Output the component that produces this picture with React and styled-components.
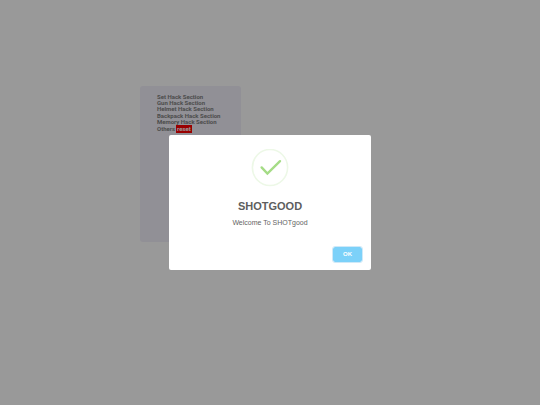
import { useState } from 'react';
import styled, { createGlobalStyle } from 'styled-components';

const GlobalStyle = createGlobalStyle`
    body {
        margin: 0;
        background-color: #ffffff;
        font-family: 'Liberation Sans', Arial, sans-serif;
    }
`;
const Page = styled.main`
    display: flex;
    box-sizing: border-box;
    min-height: 100vh;
    padding: 86px 0 0 140px;
`;
const MenuPanel = styled.section`
    align-self: flex-start;
    box-sizing: border-box;
    width: 101px;
    min-height: 156px;
    padding: 8px 0 0 17px;
    border-radius: 3px;
    background-color: #f2f0fa;
`;
const SectionList = styled.ul`
    display: flex;
    flex-direction: column;
    justify-content: space-between;
    height: 39px;
    margin: 0;
    padding: 0;
    list-style: none;
`;
const SectionItem = styled.li`
    display: flex;
    align-items: center;
    gap: 1px;
    font-family: Roboto, 'Liberation Sans', sans-serif;
    font-size: 6px;
    font-weight: bold;
    line-height: 6px;
    color: #808080;
    white-space: nowrap;
`;
const ResetButton = styled.button`
    padding: 1px;
    border: none;
    background-color: #ff0000;
    color: #ffffff;
    font: inherit;
`;
const Overlay = styled.div`
    position: fixed;
    inset: 0;
    display: grid;
    place-items: center;
    background-color: rgba(0, 0, 0, 0.4);
`;
const Modal = styled.div`
    display: flex;
    flex-direction: column;
    align-items: center;
    box-sizing: border-box;
    width: 202px;
    max-width: 90%;
    padding: 14px 8px 7px;
    border-radius: 2px;
    background-color: #ffffff;
`;
const SuccessIcon = styled.svg`
    display: block;
    width: 38px;
    height: 38px;
`;
const ModalTitle = styled.h1`
    margin: 12px 0 0;
    font-size: 11px;
    line-height: 14px;
    color: #5e5e5e;
`;
const ModalText = styled.p`
    margin: 5px 0 0;
    font-size: 7px;
    line-height: 10px;
    color: #646464;
`;
const ModalFooter = styled.div`
    display: flex;
    align-self: stretch;
    justify-content: flex-end;
    margin-top: 18px;
`;
const OkButton = styled.button`
    min-width: 31px;
    padding: 4px 8px;
    border: 1px solid #cfe9f8;
    border-radius: 3px;
    background-color: #7cd1f9;
    background-clip: padding-box;
    color: #ffffff;
    font-family: inherit;
    font-size: 6px;
    font-weight: bold;
    line-height: 7px;
    outline: none;
`;

const sections = [
    "Set Hack Section",
    "Gun Hack Section",
    "Helmet Hack Section",
    "Backpack Hack Section",
    "Memory Hack Section",
]

function App(){
    const [open,setOpen]=useState(true);

    return<>
        <GlobalStyle/>
        <Page>
            <MenuPanel>
                <SectionList>
                    {sections.map((name)=><SectionItem key={name}>{name}</SectionItem>)}
                    <SectionItem>
                        Others
                        <ResetButton type='button' onClick={()=>setOpen(true)}>reset</ResetButton>
                    </SectionItem>
                </SectionList>
            </MenuPanel>
        </Page>
        {open && <Overlay>
            <Modal role='dialog' aria-modal='true' aria-labelledby='modal-title'>
                <SuccessIcon viewBox='0 0 38 38' fill='none' aria-hidden='true'>
                    <ellipse cx='19' cy='18.5' rx='17.6' ry='18' stroke='#edf8e7' strokeWidth='1.6'/>
                    <path d='M10.6 18.4 L16.4 24.6 L29 12.2' stroke='#a5dc86' strokeWidth='2.4' strokeLinecap='round'/>
                </SuccessIcon>
                <ModalTitle id='modal-title'>SHOTGOOD</ModalTitle>
                <ModalText>Welcome To SHOTgood</ModalText>
                <ModalFooter>
                    <OkButton type='button' onClick={()=>setOpen(false)}>OK</OkButton>
                </ModalFooter>
            </Modal>
        </Overlay>}
    </>
}
export default App;
